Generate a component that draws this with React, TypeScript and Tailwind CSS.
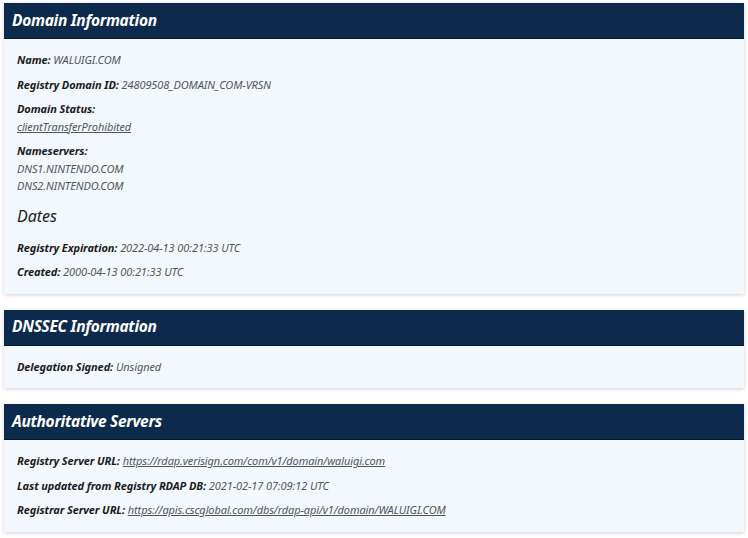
import React from "react";

const font = { fontFamily: '"Noto Sans", "Open Sans", sans-serif' };

const Card = ({ title, children }: { title: string; children: React.ReactNode }) => (
  <section className="bg-[#f2f8fd] shadow-[0_1px_4px_rgba(0,0,0,0.18)]">
    <h2 className="h-[36px] flex items-center px-[8px] bg-[#0c2a4b] border-b border-[#06182b] text-white text-[15.5px] tracking-[-0.3px] font-bold italic">
      {title}
    </h2>
    <div className="px-[13px] pt-[12px] pb-[13px] flex flex-col gap-[7px]">{children}</div>
  </section>
);

const Row = ({ label, children }: { label: string; children?: React.ReactNode }) => (
  <p className="text-[11px] leading-[17.5px] italic tracking-[-0.1px]">
    <span className="font-bold text-[#1c1c1c]">{label}</span>{" "}
    <span className="text-[#555]">{children}</span>
  </p>
);

const Link = ({ href }: { href: string }) => (
  <a href={href} className="underline text-[#555]">
    {href}
  </a>
);

export default function App() {
  return (
    <div className="w-[748px] min-h-[538px] bg-white px-[4px] pt-[3px] flex flex-col gap-[16px]" style={font}>
      <Card title="Domain Information">
        <Row label="Name:">WALUIGI.COM</Row>
        <Row label="Registry Domain ID:">24809508_DOMAIN_COM-VRSN</Row>
        <div className="text-[11px] leading-[17.5px] italic tracking-[-0.1px]">
          <div className="font-bold text-[#1c1c1c]">Domain Status:</div>
          <a href="#" className="underline text-[#555]">clientTransferProhibited</a>
        </div>
        <div className="text-[11px] leading-[17.5px] italic tracking-[-0.1px]">
          <div className="font-bold text-[#1c1c1c]">Nameservers:</div>
          <div className="text-[#555]">DNS1.NINTENDO.COM</div>
          <div className="text-[#555]">DNS2.NINTENDO.COM</div>
        </div>
        <h3 className="mt-[3px] mb-[5px] text-[16px] leading-[22px] italic text-[#1c1c1c]">Dates</h3>
        <Row label="Registry Expiration:">2022-04-13 00:21:33 UTC</Row>
        <Row label="Created:">2000-04-13 00:21:33 UTC</Row>
      </Card>
      <Card title="DNSSEC Information">
        <Row label="Delegation Signed:">Unsigned</Row>
      </Card>
      <Card title="Authoritative Servers">
        <Row label="Registry Server URL:">
          <Link href="https://rdap.verisign.com/com/v1/domain/waluigi.com" />
        </Row>
        <Row label="Last updated from Registry RDAP DB:">2021-02-17 07:09:12 UTC</Row>
        <Row label="Registrar Server URL:">
          <Link href="https://apis.cscglobal.com/dbs/rdap-api/v1/domain/WALUIGI.COM" />
        </Row>
      </Card>
    </div>
  );
}
